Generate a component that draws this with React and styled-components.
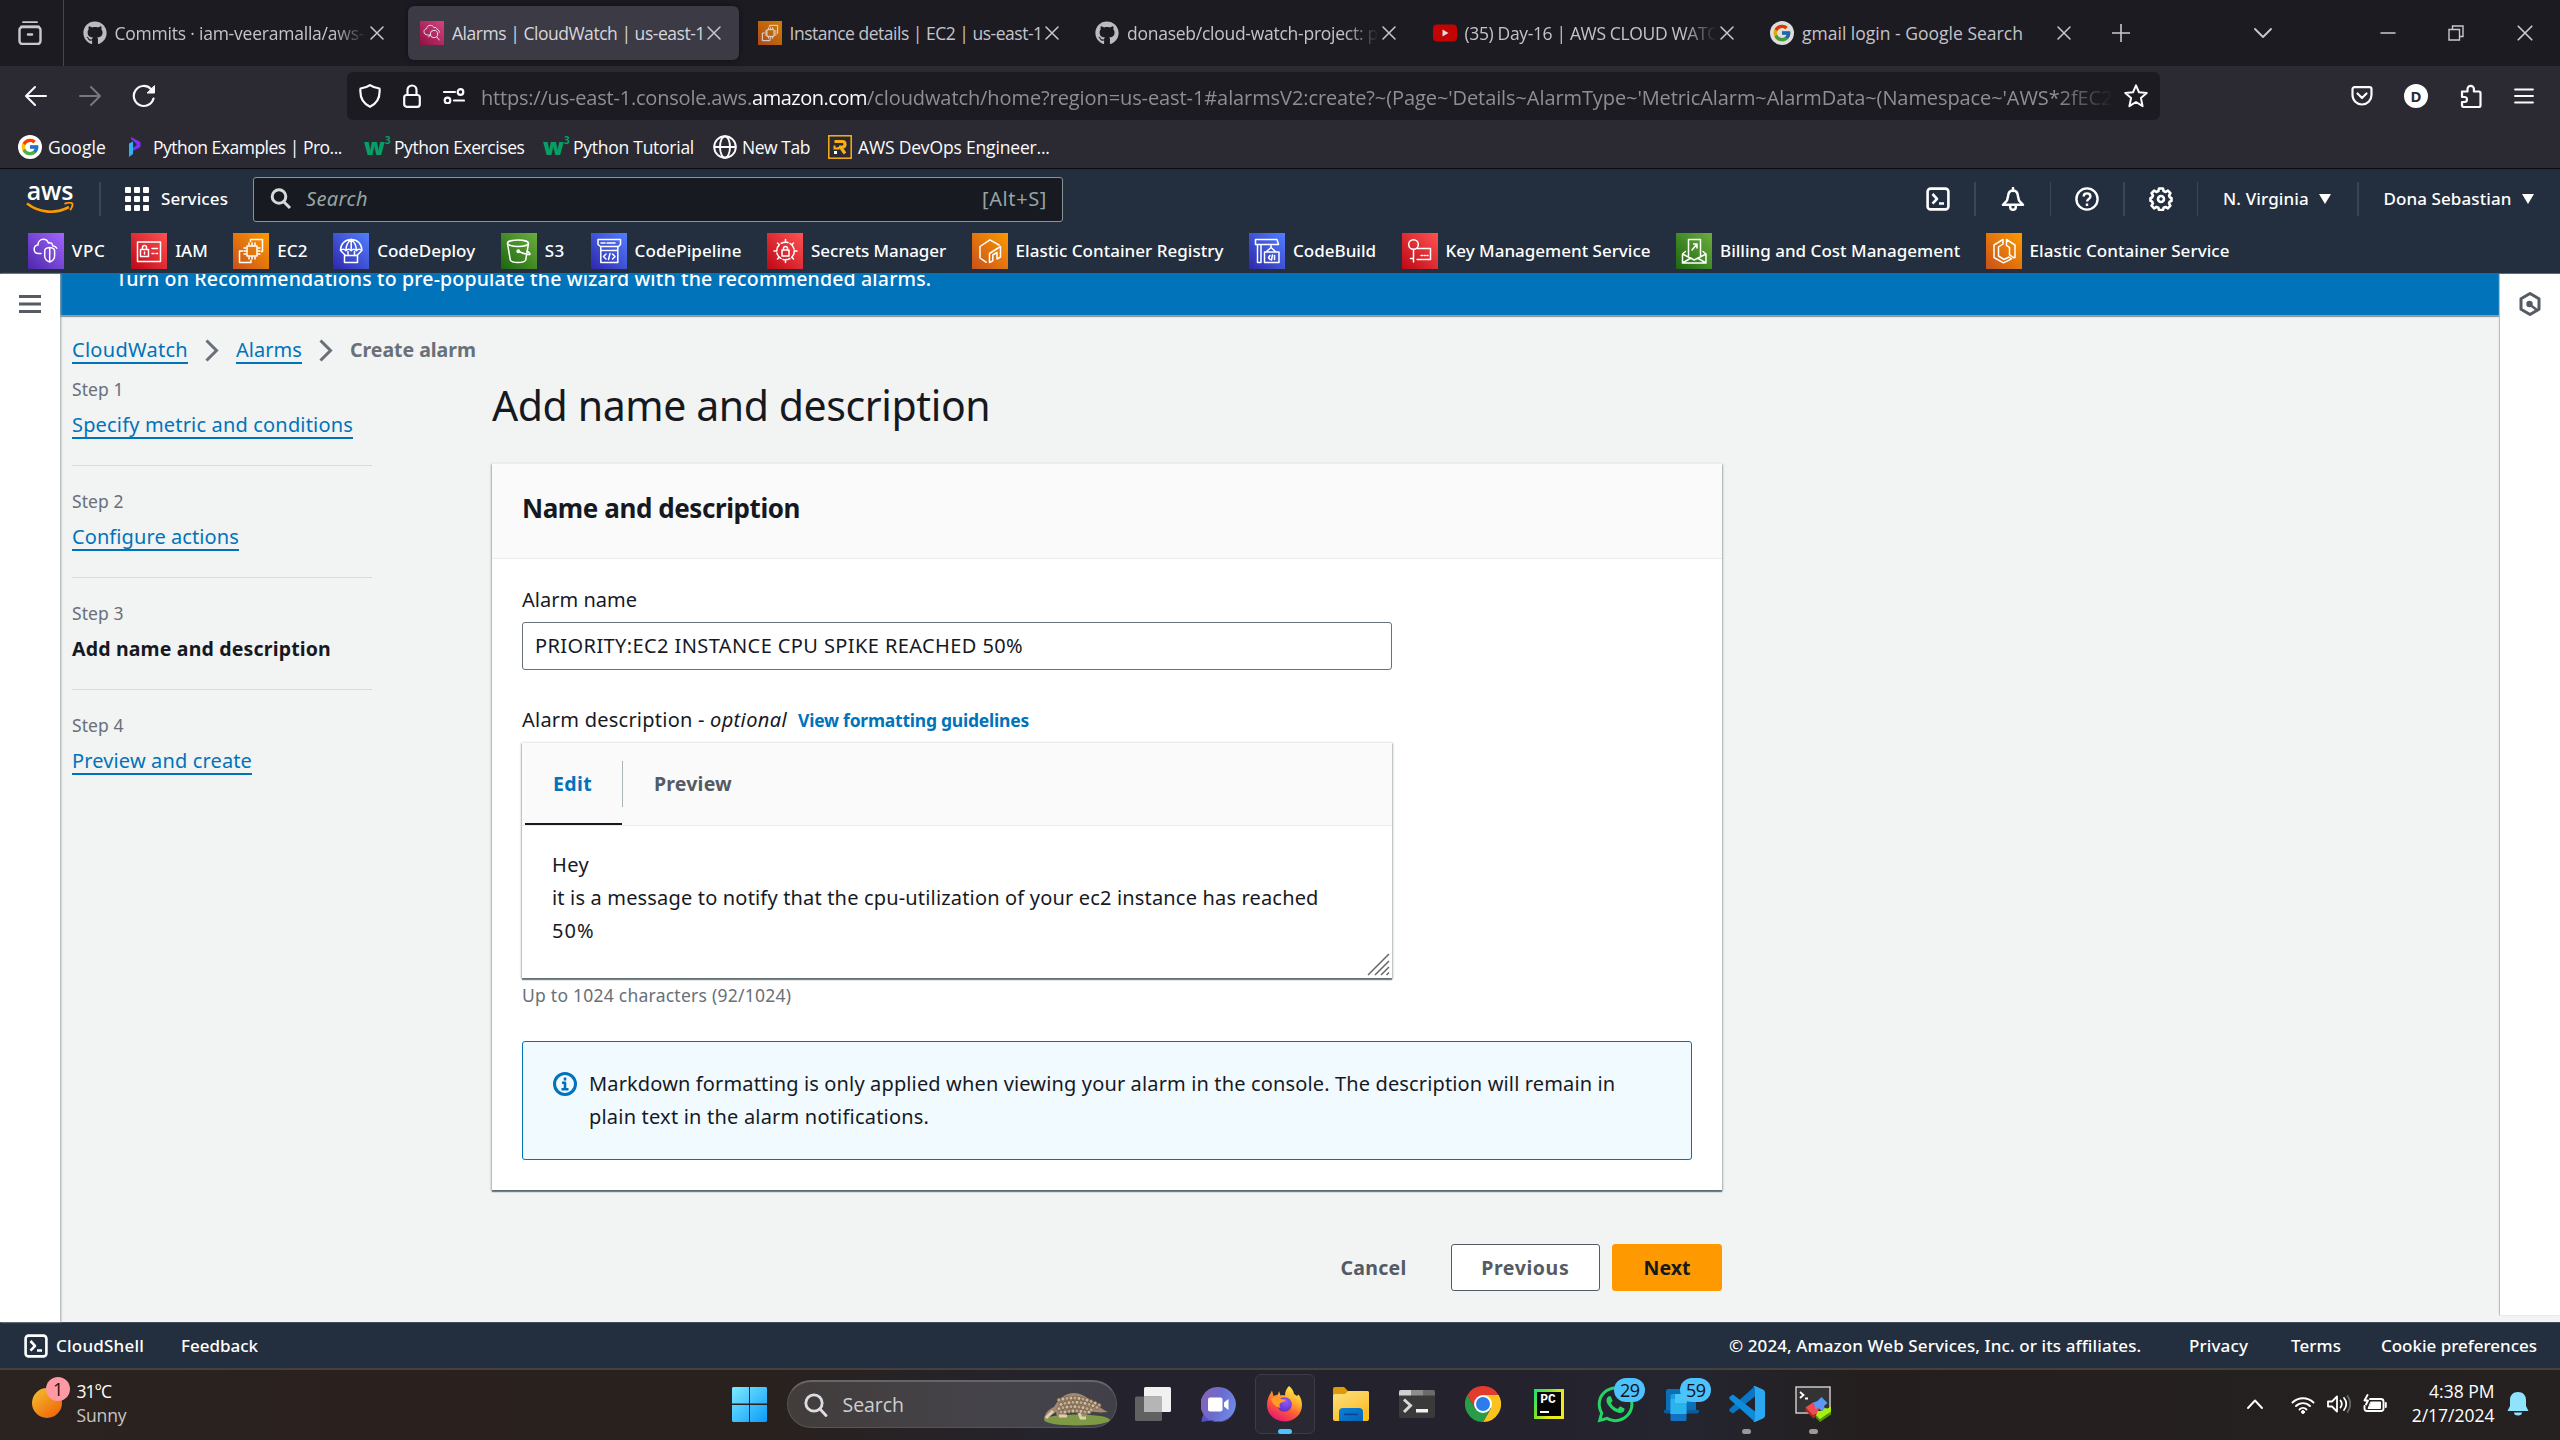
import React from 'react';
import styled, { createGlobalStyle, css } from 'styled-components';
import { FaGithub, FaWhatsapp } from 'react-icons/fa';
import { FcGoogle } from 'react-icons/fc';

const ember = '"Noto Sans", "Open Sans", sans-serif';
const segoe = '"Open Sans", "Noto Sans", sans-serif';

const Global = createGlobalStyle`
  * { box-sizing: border-box; }
  html, body { margin: 0; padding: 0; }
  body { width: 2560px; height: 1440px; overflow: hidden; background: #f2f3f3; font-family: ${ember}; }
  svg { display: block; flex: none; }
`;

const T = styled.span`
  display: block;
  flex: none;
  white-space: pre;
  font-family: ${(p) => (p.$ui ? segoe : ember)};
  font-size: ${(p) => p.$s || 20}px;
  font-weight: ${(p) => p.$b || 400};
  font-style: ${(p) => (p.$i ? 'italic' : 'normal')};
  line-height: ${(p) => p.$lh || 26}px;
  letter-spacing: ${(p) => p.$ls || 0}px;
  color: ${(p) => p.$c || '#16191f'};
  margin-left: ${(p) => p.$ml || 0}px;
  width: ${(p) => (p.$w ? p.$w + 'px' : 'auto')};
`;

const Page = styled.div`
  width: 2560px;
  height: 1440px;
  display: flex;
  flex-direction: column;
  overflow: hidden;
`;

/* ---------- browser chrome ---------- */
const TabStrip = styled.div`
  height: 66px;
  flex: none;
  background: #1c1b22;
  display: flex;
  align-items: center;
`;
const TabLead = styled.div`
  width: 64px;
  height: 66px;
  border-right: 1px solid #46454c;
  display: flex;
  align-items: center;
  padding-left: 18px;
  margin-right: 6.5px;
`;
const Tab = styled.div`
  width: 331px;
  height: 54px;
  margin-right: 6.5px;
  border-radius: 6px;
  padding-left: 12px;
  display: flex;
  align-items: center;
  background: ${(p) => (p.$active ? '#3b3a45' : 'transparent')};
  box-shadow: ${(p) => (p.$active ? '0 0 5px rgba(0,0,0,.5)' : 'none')};
`;
const TabTitle = styled.div`
  width: 254px;
  margin: 0 0 0 8px;
  ${(p) =>
    p.$fade &&
    css`
      mask-image: linear-gradient(to right, #000 86%, transparent 99%);
    `}
`;
const TabIcon = styled.div`
  width: 24px;
  height: 24px;
  opacity: 0.85;
  display: flex;
  align-items: center;
`;
const Gap = styled.div`
  flex: none;
  width: ${(p) => p.$w}px;
`;
const NavBar = styled.div`
  height: 60px;
  flex: none;
  background: #2b2a33;
  display: flex;
  align-items: center;
  padding-left: 24px;
`;
const UrlBar = styled.div`
  width: 1813px;
  height: 48px;
  border-radius: 6px;
  background: #1c1b22;
  display: flex;
  align-items: center;
  padding-left: 12px;
`;
const UrlText = styled.div`
  width: 1633px;
  margin-left: 16px;
  padding-top: 3px;
  display: flex;
  mask-image: linear-gradient(to right, #000 96.5%, transparent 100%);
`;
const Bookmarks = styled.div`
  height: 43px;
  flex: none;
  background: #2b2a33;
  border-bottom: 1px solid #0c0c0d;
  display: flex;
  align-items: center;
  padding-left: 18px;
`;
const RoundIcon = styled.div`
  width: 24px;
  height: 24px;
  border-radius: 50%;
  background: #fff;
  display: flex;
  align-items: center;
  justify-content: center;
`;
const W3Mark = styled.div`
  width: 24px;
  height: 24px;
  display: flex;
`;
const Letter = styled.span`
  font: ${(p) => p.$font};
  color: ${(p) => p.$c};
  letter-spacing: ${(p) => p.$ls || 0}px;
`;

/* ---------- AWS header ---------- */
const AwsBar = styled.div`
  height: 60px;
  flex: none;
  background: #232f3e;
  display: flex;
  align-items: center;
`;
const Logo = styled.div`
  width: 48px;
  height: 36px;
  margin-left: 26px;
  display: flex;
  flex-direction: column;
  align-items: center;
`;
const LogoWord = styled.span`
  font: 600 25px/18px ${segoe};
  height: 21px;
  letter-spacing: -0.2px;
  color: #fff;
`;
const Rule = styled.div`
  flex: none;
  width: 1.5px;
  height: 34px;
  background: #3c4653;
  margin-left: ${(p) => p.$ml || 0}px;
`;
const SearchBox = styled.div`
  width: 810px;
  height: 45px;
  margin-left: 25px;
  border: 1.5px solid #879596;
  border-radius: 3px;
  background: #171a21;
  display: flex;
  align-items: center;
  padding-left: 16px;
`;
const FavBar = styled.div`
  height: 45px;
  flex: none;
  background: #232f3e;
  border-bottom: 1px solid #545b64;
  display: flex;
  align-items: center;
  padding-left: 28px;
  gap: 25.8px;
`;
const Fav = styled.div`
  display: flex;
  align-items: center;
  gap: 7.7px;
`;
const Tile = styled.div`
  width: 36px;
  height: 36px;
  background: linear-gradient(45deg, ${(p) => p.$from}, ${(p) => p.$to});
`;
const SmallTile = styled(Tile)`
  width: 24px;
  height: 24px;
  & > svg {
    width: 24px;
    height: 24px;
  }
`;

/* ---------- console body ---------- */
const Body = styled.div`
  height: 1048px;
  flex: none;
  display: flex;
  background: #f2f3f3;
`;
const Rail = styled.div`
  width: 60px;
  height: ${(p) => p.$h}px;
  background: #fff;
  z-index: 1;
  box-shadow: ${(p) => (p.$right ? '-1px 0 1px #b9c0c4' : '1px 0 2px #9fa8ac')};
  padding: 18px 0 0 ${(p) => (p.$right ? 18 : 19)}px;
`;
const Content = styled.div`
  width: 2440px;
`;
const BlueBar = styled.div`
  height: 41px;
  background: #0073bb;
  overflow: hidden;
  box-shadow: 0 2px 1px #8d9aa0;
`;
const BlueText = styled.div`
  margin-top: -10px;
  padding-left: 56px;
`;
const Crumbs = styled.div`
  height: 49px;
  padding: 21px 0 0 12px;
  display: flex;
  align-items: flex-start;
`;
const Link = styled.a`
  display: block;
  width: max-content;
  padding-top: 2px;
  border-bottom: 2px solid ${(p) => (p.$current ? 'transparent' : '#0073bb')};
`;
const CrumbArrow = styled.svg`
  margin: 0 17px;
`;
const Columns = styled.div`
  margin-top: 12px;
  padding-left: 12px;
  display: grid;
  grid-template-columns: 300px 1230px;
  column-gap: 120px;
  align-items: start;
`;
const Step = styled.div`
  height: 112px;
  & > a {
    margin-top: 8px;
  }
`;
const StepRule = styled.div`
  height: 1px;
  margin-top: 26px;
  background: #d5dbdb;
`;
const Heading = styled.div`
  padding-top: 2px;
`;
const Card = styled.section`
  margin-top: 30px;
  height: 727px;
  background: #fff;
  border-top: 1px solid #eaeded;
  box-shadow: 0 2px 1px 0 rgba(0, 28, 36, 0.45), 1px 1px 2px 0 rgba(0, 28, 36, 0.25), -1px 1px 2px 0 rgba(0, 28, 36, 0.25);
`;
const CardHead = styled.header`
  height: 95px;
  background: #fafafa;
  border-bottom: 1px solid #eaeded;
  padding: 26px 30px 0;
`;
const CardBody = styled.div`
  padding: 24px 30px 0;
`;
const Field = styled.div`
  width: 870px;
  height: 48px;
  margin-top: 6px;
  border: 1.5px solid #687078;
  border-radius: 3px;
  padding-left: 12px;
  display: flex;
  align-items: center;
`;
const LabelRow = styled.div`
  margin-top: 33px;
  display: flex;
  align-items: baseline;
`;
const Editor = styled.div`
  position: relative;
  width: 870px;
  height: 236px;
  margin-top: 5px;
  background: #fff;
  border-top: 1px solid #eaeded;
  box-shadow: 0 2px 1px 0 rgba(0, 28, 36, 0.45), 1px 1px 2px 0 rgba(0, 28, 36, 0.25), -1px 1px 2px 0 rgba(0, 28, 36, 0.25);
`;
const EditorTabs = styled.div`
  height: 83px;
  background: #fafafa;
  border-bottom: 1px solid #eaeded;
  display: flex;
`;
const EditorTab = styled.div`
  height: 82px;
  margin-left: 3px;
  width: 97px;
  border-bottom: 2px solid ${(p) => (p.$active ? '#16191f' : 'transparent')};
  padding: 28px 0 0 28px;
`;
const TabRule = styled.div`
  width: 1px;
  height: 46px;
  margin-top: 18px;
  background: #aab7b8;
`;
const EditorText = styled.div`
  padding: 22px 0 0 30px;
`;
const Handle = styled.svg`
  position: absolute;
  right: 1px;
  bottom: 1px;
`;
const Hint = styled.div`
  padding-top: 2px;
`;
const Info = styled.div`
  height: 119px;
  width: 1170px;
  margin-top: 31px;
  border: 1.5px solid #0073bb;
  border-radius: 3px;
  background: #f1faff;
  padding: 25px 0 0 30px;
  display: flex;
  gap: 12px;
  & > svg {
    margin-top: 5px;
  }
`;
const Actions = styled.div`
  margin-top: 54px;
  display: flex;
  justify-content: flex-end;
  align-items: center;
`;
const Button = styled.button`
  width: ${(p) => p.$w}px;
  height: 47px;
  margin-left: ${(p) => p.$ml}px;
  padding: 0;
  border-radius: 3px;
  border: 1.5px solid ${(p) => (p.$primary ? '#ff9900' : '#545b64')};
  background: ${(p) => (p.$primary ? '#ff9900' : '#fff')};
  display: flex;
  align-items: center;
  justify-content: center;
`;
const Footer = styled.footer`
  height: 46px;
  flex: none;
  background: #232f3e;
  border-top: 1px solid #414d5c;
  display: flex;
  align-items: center;
  padding: 0 0 0 24px;
`;

/* ---------- taskbar ---------- */
const Taskbar = styled.div`
  height: 72px;
  flex: none;
  border-top: 2px solid #45413f;
  padding-bottom: 2px;
  background: linear-gradient(to right, #2b231f 0, #2a211f 480px, #29211e 760px, #24232d 1080px, #24232d 1550px, #242530 1690px, #241f1e 1860px, #252120 100%);
  display: flex;
  align-items: center;
`;
const Weather = styled.div`
  position: relative;
  width: 44.5px;
  height: 48px;
  margin-left: 32px;
  padding-top: 8px;
`;
const WeatherText = styled.div`
  height: 48px;
  width: 655px;
  margin-top: -2px;
  display: flex;
  flex-direction: column;
`;
const Badge = styled.span`
  position: absolute;
  left: ${(p) => p.$x}px;
  top: ${(p) => p.$y}px;
  width: ${(p) => p.$w}px;
  height: 24px;
  border-radius: 12px;
  background: ${(p) => p.$bg};
  color: #111;
  font: 18px/24px ${segoe};
  letter-spacing: -0.5px;
  text-align: center;
`;
const SearchPill = styled.div`
  position: relative;
  width: 330px;
  height: 48px;
  margin-left: 20px;
  border-radius: 24px;
  border: 1.5px solid #56545a;
  border-top: 2px solid #67656a;
  background: linear-gradient(to right, #423d3b, #45434a 60%, #414049);
  display: flex;
  align-items: center;
  padding-left: 16px;
`;
const Pangolin = styled.svg`
  position: absolute;
  left: 254px;
  top: 10px;
`;
const AppTile = styled.div`
  position: relative;
  flex: none;
  width: 60px;
  height: 60px;
  margin-left: 6.1px;
  border-radius: 6px;
  border: 1.5px solid ${(p) => (p.$active ? '#3d3c46' : 'transparent')};
  background: ${(p) => (p.$active ? '#2a2933' : 'transparent')};
  display: flex;
  align-items: center;
  justify-content: center;
`;
const RunDot = styled.span`
  position: absolute;
  bottom: -0.5px;
  left: ${(p) => (p.$wide ? 22 : 24)}px;
  width: ${(p) => (p.$wide ? 14 : 9)}px;
  height: 5px;
  border-radius: 3px;
  background: ${(p) => (p.$wide ? '#4cc2ff' : '#9a9999')};
`;
const Clock = styled.div`
  width: 84px;
  height: 48px;
  margin: -2px 0 0 24px;
  display: flex;
  flex-direction: column;
  align-items: flex-end;
`;

/* ---------- icons ---------- */
const S = ({ w = 24, h, vb, c = '#fff', sw = 2, fill = 'none', children }) => (
  <svg width={w} height={h || w} viewBox={vb || `0 0 ${w} ${h || w}`} fill={fill} stroke={c} strokeWidth={sw} strokeLinecap="round" strokeLinejoin="round">
    {children}
  </svg>
);
const Close = ({ c = '#c9c9cc', w = 16 }) => (
  <S w={w} vb="0 0 16 16" c={c} sw={1.5}>
    <path d="M2 2l12 12M14 2L2 14" />
  </S>
);
const ShellIcon = () => (
  <S w={24} sw={2.6}>
    <rect x="1.6" y="1.6" width="20.8" height="20.8" rx="3" />
    <path d="M6.500 7l4.500 4.800-4.500 4.800M13 16.500h5" strokeLinecap="butt" />
  </S>
);
const Help = () => (
  <S w={24} sw={2.4}>
    <circle cx="12" cy="12" r="10.6" />
    <path d="M8.7 9.6c0-2 1.4-3.2 3.3-3.2s3.4 1.2 3.4 3c0 2.4-3.3 2.6-3.3 5.2M12 16.6v2.4" strokeLinecap="butt" />
  </S>
);
const BellIcon = () => (
  <S w={24} sw={2.5}>
    <path d="M12 1v3M12 3.5c-3.6 0-4.8 2.6-5 6L6 13.5 2 17.8h20L18 13.5l-1-4c-.2-3.400-1.400-6-5-6zM9.200 18.500v1.500a2.800 2.800 0 0 0 5.600 0v-1.500" />
  </S>
);
const GearIcon = () => (
  <S w={24} sw={2.6}>
    <path d="M10 1.500h4l.6 2.600 2 .9 2.300-1.400 2.500 2.600-1.300 2.300.8 2 1.600.4v3l-1.700.6-.8 1.900 1.300 2.300-2.400 2.600-2.300-1.300-2 .8-.6 2.200h-4l-.6-2.200-2-.8-2.300 1.300-2.500-2.600 1.300-2.300-.8-1.900-1.600-.6v-3l1.600-.4.8-2-1.300-2.300 2.500-2.600 2.300 1.400 2-.9z" />
    <circle cx="12" cy="12" r="3" />
  </S>
);
const Tri = () => (
  <svg width="12" height="10" viewBox="0 0 12 10" fill="#fff">
    <path d="M0 0h12L6 10z" />
  </svg>
);
const Chevron = () => (
  <CrumbArrow width="14" height="28" viewBox="0 0 14 28" fill="none" stroke="#687078" strokeWidth="3">
    <path d="M1.500 4.500l10 10-10 10" />
  </CrumbArrow>
);
const Ec2Art = () => (
  <S w={36} sw={1.5}>
    <rect x="14" y="13" width="10" height="10" />
    <path d="M16 12v-2M19 12v-2M22 12v-2M16 26v-2M19 26v-2M22 26v-2M13 15h-2M13 18h-2M13 21h-2M27 15h-2M27 18h-2M27 21h-2" />
    <path d="M17.500 9V6.500h12v12H28M10 18H6.500v11.500H18V27" strokeLinecap="butt" />
  </S>
);
const ART = {
  VPC: (
    <S w={36} sw={1.5}>
      <path d="M13 20.500h-2.500c-2.700 0-4.300-2-4.300-4.300s1.600-4 3.800-4.200c0-3.300 2.300-5.700 5.400-5.700 2.500 0 4.300 1.400 5 3.700 2.500-.8 4 .5 4.200 2.700 2 .2 3.500 1 4.200 2.500" />
      <path d="M21.700 14.600c3 .2 4.900 1.600 4.900 3.400v5c0 3-2 5-4.900 6-3-1-5-3-5-6v-5c0-1.800 2-3.200 5-3.400zM21.700 14.600V29" />
    </S>
  ),
  IAM: (
    <S w={36} sw={1.5}>
      <rect x="6.500" y="9" width="23" height="19.500" />
      <rect x="9.500" y="16.500" width="8" height="7" />
      <path d="M11.500 16v-1.500a2 2 0 0 1 4 0V16M13.500 19v2M21 15.500h5.500M21 20.500h2M25 20.500h1.500" />
    </S>
  ),
  EC2: <Ec2Art />,
  CodeDeploy: (
    <S w={36} sw={1.5}>
      <path d="M7.500 17.500c0-6.500 4.500-11 10.700-11s10.700 4.500 10.700 11c-2-1.800-3.800-1.800-5.500.2-1.800-2-3.500-2-5.200 0-1.800-2-3.500-2-5.300 0-1.700-2-3.400-2-5.400-.2zM18.200 6.500v11M18.200 6.500c-3.500 2.500-5.300 6-5.300 11M18.200 6.500c3.500 2.500 5.200 6 5.200 11M7.500 17.500l5 5M28.900 17.500l-5 5M15 18.500v4M21.500 18.500v4" />
      <rect x="11.500" y="22.500" width="13" height="7" />
    </S>
  ),
  S3: (
    <S w={36} sw={1.5}>
      <ellipse cx="17" cy="10.200" rx="10.500" ry="3.200" />
      <path d="M6.500 10.500L9.300 27c.7 1.500 4 2.500 7.700 2.500s7-1 7.700-2.500l2.800-16.500M16.500 18c4 1.800 9 3.800 12.300 3.500.8-.4-.8-2.200-3-3.500" />
      <circle cx="17.300" cy="18.200" r="1.200" />
    </S>
  ),
  CodePipeline: (
    <S w={36} sw={1.5}>
      <path d="M7 6.500h22.500v5l-2 2h-18l-2.500-2zM9.800 14v15.500h17V14M9.800 17.500h17M10 10h4M16 10h8" />
      <path d="M15 21l-2.500 2.500L15 26M21.500 21l2.500 2.500-2.500 2.500M19 20.500l-1.500 6" />
    </S>
  ),
  'Secrets Manager': (
    <S w={36} sw={1.5}>
      <circle cx="18.500" cy="18" r="8.800" strokeDasharray="7 2.200" />
      <rect x="15" y="17" width="7" height="6" />
      <path d="M16.500 17v-1.500a2 2 0 0 1 4 0V17M18.500 9V6.500M18.500 29.500V27M7 18h2.500M27.500 18H30M10.500 10L12 11.500M26.500 10L25 11.500M10.500 26l1.500-1.500M26.500 26L25 24.500" />
    </S>
  ),
  'Elastic Container Registry': (
    <S w={36} sw={1.5}>
      <path d="M27 12L18 6.800 8 13.500V25l6 4.200M17.500 29.500V20.500l11-7v10.500l-3.500 2V19.500l-4.200 2.500v5.800z" />
    </S>
  ),
  CodeBuild: (
    <S w={36} sw={1.5}>
      <path d="M6.500 6.500H28l1.500 5H6.500zM8.500 11.500V29.500h3.500V11.500M22 11.500V14M15.500 19v10.500H30V19zM17 19l5-4.500 5 4.500M21 22.500l-1.500 2 1.500 2M25.500 22.500v4M23.500 22l-1 5" />
    </S>
  ),
  'Key Management Service': (
    <S w={36} sw={1.5}>
      <circle cx="11.500" cy="11.500" r="4.800" />
      <path d="M11.500 16.500v12.500M8.500 25.500h3M15 15.500h4M18 15.500h10.500v11H15M19 22.500h1.500M22 22.500h1.500M25 22.500h1" />
    </S>
  ),
  'Billing and Cost Management': (
    <S w={36} sw={1.5}>
      <path d="M9.500 18.500L6.500 21v9h23.500v-9l-3-2.500M6.500 21l11.700 6L30 21M6.500 30l8.500-5M30 30l-8.500-5M12.500 22.500V6.500h12v16M16 17l5-6M17.500 11H21v4" />
    </S>
  ),
  'Elastic Container Service': (
    <S w={36} sw={1.5}>
      <path d="M17 6.500L8 12v12.500l9.500 5.300 8-4-2.500-1.800-5 2.500-5.500-3.500V14l4.500-3z" />
      <path d="M20.500 6.500L29 12v12.500l-1 .3-4.500-3V14.500l-3-2.200z" />
    </S>
  ),
};
const FAVS = [
  ['VPC', 34, 0.79, '#4d27aa', '#a166ff'],
  ['IAM', 32.5, -0.09, '#bd0816', '#ff5252'],
  ['EC2', 30.5, 0.17, '#c8511b', '#ff9900'],
  ['CodeDeploy', 98, 0.02, '#2e27ad', '#527fff'],
  ['S3', 20.5, 0.6, '#1b660f', '#6cae3e'],
  ['CodePipeline', 107, 0.05, '#2e27ad', '#527fff'],
  ['Secrets Manager', 135, -0.1, '#bd0816', '#ff5252'],
  ['Elastic Container Registry', 208, 0.03, '#c8511b', '#ff9900'],
  ['CodeBuild', 83, 0, '#2e27ad', '#527fff'],
  ['Key Management Service', 205, 0, '#bd0816', '#ff5252'],
  ['Billing and Cost Management', 240, 0.01, '#1b660f', '#6cae3e'],
  ['Elastic Container Service', 200, 0.06, '#c8511b', '#ff9900'],
];

/* ---------- taskbar drawings ---------- */
const WinLogo = () => (
  <svg width="35" height="35" viewBox="0 0 35 35">
    <defs>
      <linearGradient id="win" x1="0" y1="0" x2="1" y2="1" gradientUnits="objectBoundingBox">
        <stop offset="0" stopColor="#7eeaff" />
        <stop offset="1" stopColor="#0a9bfa" />
      </linearGradient>
      <mask id="winm">
        <path fill="#fff" d="M1 0h16v16.500H0V1zM18 0h16l1 1v15.500H18zM0 18h17v17H1l-1-1zM18 18h17v16l-1 1H18z" />
      </mask>
    </defs>
    <rect width="35" height="35" fill="url(#win)" mask="url(#winm)" />
  </svg>
);
const scales = [];
for (let r = 0; r < 4; r++) for (let k = 0; k < 11 - r; k++) scales.push([17 + k * 4 + (r % 2) * 2, 6 + r * 4.3 + Math.pow((k - 3.5) / 2.3, 2) * 0.9]);
const Taskview = () => (
  <svg width="36" height="34" viewBox="0 0 36 34">
    <rect x="9" y="0" width="27" height="25" rx="1.500" fill="#f1f1f1" />
    <rect x="0" y="9.500" width="27" height="24.500" rx="1.500" fill="#616161" />
    <rect x="9" y="9.500" width="18" height="15.500" fill="#b5b5b6" />
  </svg>
);
const Chat = () => (
  <svg width="35" height="35" viewBox="0 0 35 35">
    <defs>
      <linearGradient id="chat" x1="0" y1="0.200" x2="1" y2="0.600">
        <stop offset="0" stopColor="#8b62b8" />
        <stop offset=".5" stopColor="#6a6ccd" />
        <stop offset="1" stopColor="#6f8ae6" />
      </linearGradient>
    </defs>
    <path d="M17.500 0a17.300 17.300 0 1 1-6 33.500L.5 34.500l2-7.500A17.300 17.300 0 0 1 17.500 0z" fill="url(#chat)" />
    <path d="M2.500 27A17.300 17.300 0 0 0 33 25a17.500 17.500 0 0 1-21.500 8.500L.5 34.500z" fill="#5252c4" />
    <rect x="7" y="10.500" width="14.500" height="14" rx="2" fill="#fff" />
    <path d="M23 15.500l4.500-3.500v11L23 19.500z" fill="#fff" />
  </svg>
);
const Firefox = () => (
  <svg width="35" height="36" viewBox="0 0 35 36">
    <defs>
      <linearGradient id="ff" x1=".8" y1="0" x2=".25" y2="1">
        <stop offset="0" stopColor="#fff44f" />
        <stop offset=".35" stopColor="#ffb02e" />
        <stop offset=".62" stopColor="#ff5a36" />
        <stop offset="1" stopColor="#e3117c" />
      </linearGradient>
      <radialGradient id="ffp" cx=".6" cy=".3" r=".8">
        <stop offset="0" stopColor="#9059ff" />
        <stop offset="1" stopColor="#5a2bc0" />
      </radialGradient>
    </defs>
    <path d="M22 0c3 2 4.500 5 5 8l3 2 1.500-1.500C34 12 35 15 35 19c0 9.500-7.800 16.500-17.300 16.500S0 28.500 0 19c0-5 1.500-8.500 3.500-11.500L5 4.500l1.500 5.500L11 8.500 12 5l1.500 4.500C15 9 16 9 18 9.500c0-4 1.500-7 4-9.500z" fill="url(#ff)" />
    <circle cx="17.500" cy="18.500" r="7.300" fill="url(#ffp)" />
    <path d="M4 13c4-3 8-2 10 0l5 .8c-1 2-3 2.500-5 3-2 1-2 3-.5 5-4-.3-8-3.800-9.500-8.800z" fill="#ff9a2b" />
  </svg>
);
const Explorer = () => (
  <svg width="36" height="34" viewBox="0 0 36 34">
    <defs>
      <linearGradient id="fold" x1="0" y1="0" x2=".6" y2="1">
        <stop offset="0" stopColor="#ffe084" />
        <stop offset="1" stopColor="#fbbd20" />
      </linearGradient>
      <linearGradient id="foldb" x1="0" y1="0" x2="1" y2="1">
        <stop offset="0" stopColor="#0d7fd8" />
        <stop offset="1" stopColor="#0565b8" />
      </linearGradient>
    </defs>
    <path d="M0 2q0-2 2-2h9l4 4h19q2 0 2 2v5H0z" fill="#dd9b07" />
    <path d="M0 9q0-2 2-2h10l3-3h19q2 0 2 2v26q0 2-2 2H2q-2 0-2-2z" fill="url(#fold)" />
    <path d="M6 34V25q0-4 4-4h16q4 0 4 4v9z" fill="url(#foldb)" />
    <rect x="11" y="26.500" width="14" height="1.800" rx=".9" fill="#0a4a8c" />
  </svg>
);
const Terminal = () => (
  <svg width="36" height="28" viewBox="0 0 36 28">
    <rect width="36" height="28" rx="2" fill="#3a3a3b" />
    <path d="M0 2q0-2 2-2h10v5.500H0z" fill="#cfcfcf" />
    <path d="M12 0h12v5.500H12z" fill="#8d8d8d" />
    <path d="M24 0h10q2 0 2 2v3.500H24z" fill="#6b6b6b" />
    <path d="M5 9.500l6.500 6L5 22" stroke="#d9d9d9" strokeWidth="3" fill="none" />
    <rect x="17" y="19" width="12" height="3.500" fill="#f2f2f2" />
  </svg>
);
const Chrome = () => (
  <svg width="36" height="36" viewBox="0 0 36 36">
    <path d="M18 9H33.600A18 18 0 0 1 18 36l7.800-13.500z" fill="#fcc31e" />
    <path d="M2.400 9A18 18 0 0 0 18 36l7.800-13.500L18 26 10.200 22.500z" fill="#2a9b47" />
    <path d="M18 9h15.600A18 18 0 0 0 2.400 9l7.800 13.500z" fill="#e33b2e" />
    <circle cx="18" cy="18" r="9" fill="#fff" />
    <circle cx="18" cy="18" r="7" fill="#2b7de9" />
  </svg>
);
const PyBox = styled.div`
  width: 30px;
  height: 30px;
  padding: 3px;
  background: linear-gradient(120deg, #14e27a 0, #7be02f 35%, #e8e91d 65%, #f3ec1f);
`;
const PyInner = styled.div`
  width: 24px;
  height: 24px;
  background: #050505;
  padding: 1px 0 0 3px;
  color: #fff;
  font: 700 13px/13px "Liberation Mono", monospace;
`;
const PyDash = styled.div`
  width: 9px;
  height: 2px;
  margin-top: 5px;
  background: #fff;
`;
const Phone = () => (
  <svg width="35" height="33" viewBox="0 0 35 33">
    <path d="M2 3q0-2 2-2h25q3 0 3 3v18H2z" fill="#0b6fb8" />
    <path d="M0 22h35v1.500q0 2-2 2H2q-2 0-2-2z" fill="#0a5c9c" />
    <path d="M6.500 8q0-2 2-2H15v20H6.500z" fill="#1a9be4" />
    <rect x="6.500" y="11" width="16" height="22" rx="1" fill="#1172c4" />
    <path d="M6.500 11h16v15h-16z" fill="#2bb3ee" />
    <path d="M11 6h12v9H11z" fill="#47c5f6" />
  </svg>
);
const Code = () => (
  <svg width="36" height="36" viewBox="0 0 36 36">
    <path d="M26 0v10.500L4 27.500 1 25.500q-1.500-1.500 0-3z" fill="#0a76c4" />
    <path d="M1 10.500L4 8.500 26 25.500V36L1 13.500q-1.500-1.500 0-3z" fill="#0d8bdc" />
    <path d="M26 0l8 3.500q2 1 2 3v23q0 2-2 3L26 36q-1 0-2-1 2 .5 2-2V3q0-2.500-2-2 1-1 2-1z" fill="#2aa8f2" />
  </svg>
);
const Moba = () => (
  <svg width="37" height="36" viewBox="0 0 37 36">
    <rect x="1" y="1" width="34" height="26" fill="#333" stroke="#c9c9c9" strokeWidth="1.500" />
    <path d="M5 6l3.500 3L5 12M10 12.500h3" stroke="#fff" strokeWidth="1.800" fill="none" />
    <path d="M10.500 21.500l8-5.500 2 5 3.500 1-1 4-5 4z" fill="#f2494c" />
    <path d="M10.500 21.500l8 8 4.500-3v3l-4.500 3-8-8z" fill="#b3262b" />
    <path d="M18.500 16.500l4-1.500 4-4 6 6-3.500 3 1 3-3.500 2-3-3-3 1z" fill="#5b97f5" />
    <path d="M23 25l4 0 3-3 2.500.5 3.500-2 0 5-11 8-4-4z" fill="#a6ef0e" />
    <path d="M21 29.500l4 4 11-8v3L25 36l-4-4z" fill="#4d9a06" />
  </svg>
);

function TabItem({ icon, title, active, fade, ls }) {
  return (
    <Tab $active={active}>
      <TabIcon>{icon}</TabIcon>
      <TabTitle $fade={fade}>
        <T $ui $s={17.5} $c={active ? '#d6d6da' : '#c4c4c8'} $ls={ls}>
          {title}
        </T>
      </TabTitle>
      <Close />
    </Tab>
  );
}

function StepItem({ n, title, ls, current, last }) {
  return (
    <Step>
      <T $s={17.5} $lh={27} $c="#687078" $ls={0.06}>{`Step ${n}`}</T>
      <Link $current={current}>
        <T $s={current ? 19.5 : 20} $lh={24} $b={current ? 700 : 400} $c={current ? '#16191f' : '#0073bb'} $ls={ls}>
          {title}
        </T>
      </Link>
      {!last && <StepRule />}
    </Step>
  );
}

const Mark = ({ children, w, ls, ml = 6 }) => (
  <T $ui $s={17.5} $c="#fbfbfe" $ml={ml} $w={w} $ls={ls}>
    {children}
  </T>
);
const W3 = () => (
  <W3Mark>
    <Letter $font='800 23px/22px "Open Sans", sans-serif' $c="#04a066">w</Letter>
    <Letter $font='700 10px/10px "Open Sans", sans-serif' $c="#04a066" $ls={-1}>3</Letter>
  </W3Mark>
);
const Light = ({ children, w, ls, ml }) => (
  <T $s={17} $b={500} $c="#fff" $ml={ml} $w={w} $ls={ls}>
    {children}
  </T>
);

export default function App() {
  return (
    <Page>
      <Global />
      <TabStrip>
        <TabLead>
          <S w={24} c="#c9c9cc" sw={2.4}>
            <path d="M5 1.200h14M3 5.500h18" strokeWidth="1.800" />
            <rect x="1.500" y="6" width="21" height="17" rx="3" />
            <path d="M10 13.500h4" />
          </S>
        </TabLead>
        <TabItem fade icon={<FaGithub size={24} color="#d8d8da" />} title="Commits · iam-veeramalla/aws-" ls={-0.22} />
        <TabItem
          active
          ls={-0.47}
          title="Alarms | CloudWatch | us-east-1"
          icon={
            <SmallTile $from="#a00a42" $to="#f0458c">
              <S w={36} sw={1.5}>
                <path d="M15 21h-4c-3-.5-5-2-5-5s2-4 4-4.500c0-3 2.500-5 5.500-5s4.500 1.500 5.500 3.500c2-1 4 0 4.500 2.500 2 .5 3.500 1.500 3.500 4.500M15 21l-2 3" />
                <circle cx="21" cy="19.500" r="5.500" />
                <path d="M25 23.500l4 5" />
              </S>
            </SmallTile>
          }
        />
        <TabItem
          ls={-0.49}
          title="Instance details | EC2 | us-east-1"
          icon={
            <SmallTile $from="#c8511b" $to="#ee9000">
              <Ec2Art />
            </SmallTile>
          }
        />
        <TabItem fade icon={<FaGithub size={24} color="#d8d8da" />} title="donaseb/cloud-watch-project: p" ls={-0.26} />
        <TabItem
          fade
          ls={-0.36}
          title="(35) Day-16 | AWS CLOUD WATC"
          icon={
            <svg width="24" height="24" viewBox="0 0 24 24">
              <rect y="3.500" width="24" height="17" rx="4" fill="#e00000" />
              <path d="M9.500 8.500v7l6-3.500z" fill="#fff" />
            </svg>
          }
        />
        <TabItem
          ls={0.01}
          title="gmail login - Google Search"
          icon={
            <RoundIcon>
              <FcGoogle size={20} />
            </RoundIcon>
          }
        />
        <Gap $w={16} />
        <S w={18} c="#c9c9cc" sw={1.6}>
          <path d="M9 0.500v17M0.500 9h17" />
        </S>
        <Gap $w={124} />
        <S w={18} h={10} c="#c9c9cc" sw={1.8}>
          <path d="M1 1l8 8 8-8" />
        </S>
        <Gap $w={108} />
        <S w={16} h={2} c="#c9c9cc" sw={1.5}>
          <path d="M1 1h14" />
        </S>
        <Gap $w={52} />
        <S w={16} c="#c9c9cc" sw={1.4}>
          <path d="M1 4.500h10.500V15H1zM4.500 4V1H15v10.500h-3" strokeLinejoin="miter" />
        </S>
        <Gap $w={52} />
        <Close w={18} />
      </TabStrip>

      <NavBar>
        <S w={24} c="#fbfbfe" sw={2}>
          <path d="M22 12H2.500M11 3l-9 9 9 9" />
        </S>
        <Gap $w={30} />
        <S w={24} c="#77767d" sw={2}>
          <path d="M2 12h19.500M13 3l9 9-9 9" />
        </S>
        <Gap $w={30} />
        <S w={24} c="#fbfbfe" sw={2.2}>
          <path d="M21.500 14.500A10 10 0 1 1 19 5l2 2.500" />
          <path d="M22.500 2v7h-7z" fill="#fbfbfe" strokeWidth="1" />
        </S>
        <Gap $w={191} />
        <UrlBar>
          <S w={22} h={24} c="#fbfbfe" sw={2.2}>
            <path d="M11 1.200c2.800 2 6 3 9.500 3.300.8 8-2.500 15-9.500 18.300C4 19.500.7 12.500 1.500 4.500 5 4.200 8.200 3.200 11 1.200z" />
          </S>
          <Gap $w={22} />
          <S w={18} h={24} c="#fbfbfe" sw={2.2}>
            <rect x="1.200" y="11" width="15.600" height="11.800" rx="2.500" />
            <path d="M4.500 11V6a4.500 4.500 0 0 1 9 0v5" />
          </S>
          <Gap $w={22} />
          <S w={22} h={16} c="#fbfbfe" sw={2.2}>
            <path d="M1 4h11M11 12.500h10" />
            <circle cx="17.500" cy="4" r="2.800" />
            <circle cx="4.500" cy="12.500" r="2.800" />
          </S>
          <UrlText>
            <T $ui $lh={30} $c="#8f8e95" $w={271} $ls={-0.2}>https://us-east-1.console.aws.</T>
            <T $ui $lh={30} $c="#fbfbfe" $w={115} $ls={-0.48}>amazon.com</T>
            <T $ui $lh={30} $c="#8f8e95" $w={1246} $ls={-0.09}>{"/cloudwatch/home?region=us-east-1#alarmsV2:create?~(Page~'Details~AlarmType~'MetricAlarm~AlarmData~(Namespace~'AWS*2fEC2"}</T>
          </UrlText>
          <Gap $w={10} />
          <S w={24} c="#fbfbfe" sw={2}>
            <path d="M12 1.300l3 7 7.700.6-5.800 5 1.700 8.300L12 18l-6.600 4.200 1.700-8.300-5.800-5L9 8.300z" />
          </S>
        </UrlBar>
        <Gap $w={191} />
        <S w={22} h={20} c="#fbfbfe" sw={2.2}>
          <path d="M3.500 1.200h15a2 2 0 0 1 2 2V9a9.500 9.500 0 0 1-19 0V3.200a2 2 0 0 1 2-2zM6.500 7.500L11 12l4.500-4.500" />
        </S>
        <Gap $w={31} />
        <RoundIcon>
          <Letter $font='700 15px/24px "Noto Sans", sans-serif' $c="#2b2a33">D</Letter>
        </RoundIcon>
        <Gap $w={32} />
        <S w={22} h={24} c="#fbfbfe" sw={2.2}>
          <path d="M2 9V7.500h5.500V5a3.200 3.200 0 0 1 6.400 0v2.500h5.100q1.500 0 1.500 1.500v12.500q0 1.500-1.500 1.500H4q-2 0-2-1.500V18h2.500a2.500 2.500 0 0 0 0-5H2z" />
        </S>
        <Gap $w={32} />
        <S w={20} h={16} c="#fbfbfe" sw={1.8}>
          <path d="M1 1.500h18M1 8h18M1 14.500h18" />
        </S>
      </NavBar>

      <Bookmarks>
        <RoundIcon>
          <FcGoogle size={20} />
        </RoundIcon>
        <Mark w={58} ls={0.05}>Google</Mark>
        <Gap $w={23} />
        <svg width="12" height="20" viewBox="0 0 12 20">
          <path d="M0 6.500l4-2V17L0 20z" fill="#2ab4f5" />
          <path d="M2 2V0l9.500 5v5L4 14V10.500L7.500 8.500V7z" fill="#7b2ff7" />
        </svg>
        <Mark ml={12} w={189} ls={-0.5}>Python Examples | Pro...</Mark>
        <Gap $w={22} />
        <W3 />
        <Mark w={130} ls={-0.42}>Python Exercises</Mark>
        <Gap $w={19} />
        <W3 />
        <Mark w={121} ls={-0.26}>Python Tutorial</Mark>
        <Gap $w={19} />
        <S w={24} c="#fbfbfe" sw={1.9}>
          <circle cx="12" cy="12" r="10.800" />
          <ellipse cx="12" cy="12" rx="5" ry="10.800" />
          <path d="M1.500 12h21" />
        </S>
        <Mark ml={5} w={68} ls={-0.46}>New Tab</Mark>
        <Gap $w={18} />
        <svg width="24" height="24" viewBox="0 0 24 24" fill="none">
          <rect x=".8" y=".8" width="22.400" height="22.400" stroke="#f9b016" strokeWidth="1.500" />
          <path d="M6.500 6.500h8q2.500 0 2.500 2.700T14.500 12H11M12.500 12l4.500 6.500" stroke="#f9b016" strokeWidth="3.200" />
          <path d="M6.500 10.500v3h4v-1.500" stroke="#f9b016" strokeWidth="2" />
          <rect x="6" y="16" width="3" height="3" fill="#fff" />
        </svg>
        <Mark w={192} ls={-0.17}>AWS DevOps Engineer...</Mark>
      </Bookmarks>

      <AwsBar>
        <Logo>
          <LogoWord>aws</LogoWord>
          <svg width="48" height="12" viewBox="0 0 48 12" fill="none" stroke="#ff9900">
            <path d="M1 1.500C14 11.500 30 12 43 5" strokeWidth="2.600" />
            <path d="M38.500 1.800c3-1 6.500-1.300 7.500-.5s.2 4-1.800 7" strokeWidth="1.800" />
          </svg>
        </Logo>
        <Rule $ml={25} />
        <Gap $w={24.5} />
        <svg width="24" height="24" fill="#fff">
          {[0, 9, 18].map((y) => [0, 9, 18].map((x) => <rect key={x + '-' + y} x={x} y={y} width="6" height="6" rx="1" />))}
        </svg>
        <Light ml={12} w={67} ls={0.1}>Services</Light>
        <SearchBox>
          <S w={22} c="#d5dbdb" sw={3}>
            <circle cx="9" cy="8.500" r="6.800" />
            <path d="M14 14l6 6" strokeLinecap="butt" />
          </S>
          <T $i $c="#95a5a6" $ml={14} $w={62} $ls={0.39}>Search</T>
          <Gap $w={614} />
          <T $c="#95a5a6" $w={65} $ls={0.61}>[Alt+S]</T>
        </SearchBox>
        <Gap $w={863} />
        <ShellIcon />
        <Rule $ml={24} />
        <Gap $w={25} />
        <BellIcon />
        <Rule $ml={25} />
        <Gap $w={24} />
        <Help />
        <Rule $ml={24} />
        <Gap $w={24} />
        <GearIcon />
        <Rule $ml={24} />
        <Light ml={25} w={86} ls={0.14}>N. Virginia</Light>
        <Gap $w={10} />
        <Tri />
        <Rule $ml={26} />
        <Light ml={25} w={128} ls={0.09}>Dona Sebastian</Light>
        <Gap $w={10} />
        <Tri />
      </AwsBar>

      <FavBar>
        {FAVS.map(([name, w, ls, from, to]) => (
          <Fav key={name}>
            <Tile $from={from} $to={to}>{ART[name]}</Tile>
            <Light w={w} ls={ls}>{name}</Light>
          </Fav>
        ))}
      </FavBar>

      <Body>
        <Rail $h={1048}>
          <svg width="22" height="24" viewBox="0 0 22 24" fill="#545b64">
            <rect y="3" width="22" height="3" />
            <rect y="10.500" width="22" height="3" />
            <rect y="18" width="22" height="3" />
          </svg>
        </Rail>
        <Content>
          <BlueBar>
            <BlueText>
              <T $s={19.5} $b={500} $lh={30} $c="#fff" $ls={0.17}>Turn on Recommendations to pre-populate the wizard with the recommended alarms.</T>
            </BlueText>
          </BlueBar>
          <Crumbs>
            <Link><T $lh={24} $c="#0073bb" $ls={0.28}>CloudWatch</T></Link>
            <Chevron />
            <Link><T $lh={24} $c="#0073bb" $ls={0.05}>Alarms</T></Link>
            <Chevron />
            <Link $current><T $s={19.5} $lh={24} $b={700} $c="#687078" $ls={-0.02}>Create alarm</T></Link>
          </Crumbs>
          <Columns>
            <div>
              <StepItem n={1} title="Specify metric and conditions" ls={0.17} />
              <StepItem n={2} title="Configure actions" ls={0.09} />
              <StepItem n={3} title="Add name and description" ls={0.17} current />
              <StepItem n={4} title="Preview and create" ls={0.14} last />
            </div>
            <div>
              <Heading>
                <T $s={41} $lh={55} $ls={-0.4}>Add name and description</T>
              </Heading>
              <Card>
                <CardHead>
                  <T $s={26} $b={700} $lh={36} $ls={-0.42}>Name and description</T>
                </CardHead>
                <CardBody>
                  <T $lh={33} $ls={0.01}>Alarm name</T>
                  <Field>
                    <T $ls={0.4}>PRIORITY:EC2 INSTANCE CPU SPIKE REACHED 50%</T>
                  </Field>
                  <LabelRow>
                    <T $lh={33} $w={188} $ls={0.23}>Alarm description - </T>
                    <T $lh={33} $i $w={77} $ls={0.38}>optional</T>
                    <T $lh={33} $s={17.5} $b={700} $c="#0073bb" $ml={11} $ls={-0.23}>View formatting guidelines</T>
                  </LabelRow>
                  <Editor>
                    <EditorTabs>
                      <EditorTab $active>
                        <T $s={19.5} $b={700} $c="#0073bb" $ls={0.36}>Edit</T>
                      </EditorTab>
                      <TabRule />
                      <EditorTab>
                        <T $s={19.5} $b={700} $c="#545b64" $ls={0.2}>Preview</T>
                      </EditorTab>
                    </EditorTabs>
                    <EditorText>
                      <T $lh={33} $ls={0.36}>Hey</T>
                      <T $lh={33} $ls={0.17}>it is a message to notify that the cpu-utilization of your ec2 instance has reached</T>
                      <T $lh={33} $ls={1}>50%</T>
                    </EditorText>
                    <Handle width="24" height="24" viewBox="0 0 24 24" stroke="#666" strokeWidth="1.500">
                      <path d="M1 22L22 1M8 22L22 8M14 22l8-8M19.500 22l2.500-2.500" />
                    </Handle>
                  </Editor>
                  <Hint>
                    <T $s={17.5} $lh={30} $c="#687078" $ls={0.24}>Up to 1024 characters (92/1024)</T>
                  </Hint>
                  <Info>
                    <S w={24} c="#0073bb" sw={3}>
                      <circle cx="12" cy="12" r="10.500" />
                      <path d="M12 5.500v3M9 10.800h3V17M8.500 17.200h7" strokeLinecap="butt" strokeWidth="2.600" />
                    </S>
                    <div>
                      <T $lh={33} $ls={0.14}>Markdown formatting is only applied when viewing your alarm in the console. The description will remain in</T>
                      <T $lh={33} $ls={0.2}>plain text in the alarm notifications.</T>
                    </div>
                  </Info>
                </CardBody>
              </Card>
              <Actions>
                <T $s={19.5} $b={700} $c="#545b64" $w={66} $ls={0.27}>Cancel</T>
                <Button $w={149.5} $ml={44}><T $s={19.5} $b={700} $c="#545b64" $ls={0.59}>Previous</T></Button>
                <Button $w={110} $ml={12} $primary><T $s={19.5} $b={700} $ls={0.04}>Next</T></Button>
              </Actions>
            </div>
          </Columns>
        </Content>
        <Rail $right $h={1041}>
          <S w={24} c="#545b64" sw={3}>
            <path d="M12 1.500l9 5.200v10.600l-9 5.200-9-5.200V6.700z" />
            <circle cx="11.500" cy="12" r="2.500" fill="#545b64" strokeWidth="1.500" />
            <path d="M13 13.500l6 4.500" strokeWidth="2.500" />
          </S>
        </Rail>
      </Body>

      <Footer>
        <ShellIcon />
        <Light ml={8} w={88} ls={0.21}>CloudShell</Light>
        <Light ml={37} w={77} ls={-0.02}>Feedback</Light>
        <Gap $w={1471} />
        <Light w={412} ls={0.1}>© 2024, Amazon Web Services, Inc. or its affiliates.</Light>
        <Light ml={48} w={59} ls={0.12}>Privacy</Light>
        <Light ml={43} w={50} ls={0.06}>Terms</Light>
        <Light ml={40} w={156} ls={-0.03}>Cookie preferences</Light>
      </Footer>

      <Taskbar>
        <Weather>
          <svg width="30" height="30" viewBox="0 0 30 30">
            <defs>
              <linearGradient id="sun" x1="0" y1="0" x2=".8" y2="1">
                <stop offset="0" stopColor="#f5c22e" />
                <stop offset="1" stopColor="#f0640a" />
              </linearGradient>
            </defs>
            <circle cx="15" cy="15" r="15" fill="url(#sun)" />
          </svg>
          <Badge $x={14} $y={-3} $w={24} $bg="#ff99a4">1</Badge>
        </Weather>
        <WeatherText>
          <T $ui $s={17.5} $lh={24} $c="#fff" $ls={-1}>31°C</T>
          <T $ui $s={17.5} $lh={24} $c="#c9c5c3" $ls={-0.11}>Sunny</T>
        </WeatherText>
        <WinLogo />
        <SearchPill>
          <S w={24} c="#dcdde2" sw={2.8}>
            <circle cx="10" cy="10" r="8.200" />
            <path d="M16 16l6 6.500" />
          </S>
          <T $ui $s={19.5} $c="#cfcfd2" $ml={15} $ls={-0.05}>Search</T>
          <Pangolin width="70" height="34" viewBox="0 0 70 34">
            <ellipse cx="35" cy="28" rx="33" ry="5.500" fill="#7f9a45" />
            <path d="M2 27c1-6 5-10 10-12C17 6 24 1 32 1c12 0 20 12 34 19-8 1-14 0-20-1l-1 5h-5l-2-4H24l-2 5h-7l-1-5-6 4c-2 2-5 4-6 3z" fill="#a08a70" />
            {scales.map(([x, y], i) => (
              <circle key={i} cx={x} cy={Math.min(y, 20)} r="2" fill={i % 2 ? '#d2bb9c' : '#c0a888'} stroke="#6d5a48" strokeWidth=".7" />
            ))}
            <path d="M4 26l7-7M17 24h8M37 21l2 5h5" stroke="#e0cdb4" strokeWidth="3" fill="none" />
          </Pangolin>
        </SearchPill>
        <AppTile><Taskview /></AppTile>
        <AppTile><Chat /></AppTile>
        <AppTile $active><Firefox /><RunDot $wide /></AppTile>
        <AppTile><Explorer /></AppTile>
        <AppTile><Terminal /></AppTile>
        <AppTile><Chrome /></AppTile>
        <AppTile><PyBox><PyInner>PC<PyDash /></PyInner></PyBox></AppTile>
        <AppTile><FaWhatsapp size={41} color="#25d366" /><Badge $x={28} $y={3} $w={31} $bg="#4cc2ff">29</Badge></AppTile>
        <AppTile><Phone /><Badge $x={28} $y={3} $w={31} $bg="#4cc2ff">59</Badge></AppTile>
        <AppTile><Code /><RunDot /></AppTile>
        <AppTile><Moba /><RunDot /></AppTile>
        <Gap $w={403} />
        <S w={16} h={10} sw={1.9}><path d="M1 9l7-7.500L15 9" /></S>
        <Gap $w={28} />
        <S w={24} h={19} sw={1.9}>
          <path d="M1.500 7.500a15 15 0 0 1 21 0M5 11a10 10 0 0 1 14 0M8.500 14.500a5 5 0 0 1 7 0" />
          <circle cx="12" cy="17" r="1.500" fill="#fff" strokeWidth="1" />
        </S>
        <Gap $w={12} />
        <S w={24} h={20} sw={1.8}>
          <path d="M1 7.500h4l5-5v15l-5-5H1zM13.500 6.500c1.500 2 1.500 5 0 7M17 4c3 3.500 3 8.500 0 12" />
          <path d="M20.500 2c3.500 5 3.500 11 0 16" stroke="#666" />
        </S>
        <Gap $w={12} />
        <S w={24} h={20} sw={1.9}>
          <path d="M7 5H18q2.500 0 2.500 2.500v7Q20.500 17 18 17H4q-2.500 0-2.500-2.500V12" />
          <path d="M8 8h9.500v6.500H5.500z" fill="#fff" strokeWidth="1" />
          <path d="M22.800 9v4M4.500 1L1.500 6.500H5L3 10.500" />
        </S>
        <Clock>
          <T $ui $s={17.5} $lh={24} $c="#fff">4:38 PM</T>
          <T $ui $s={17.5} $lh={24} $c="#fff">2/17/2024</T>
        </Clock>
        <Gap $w={12} />
        <svg width="22" height="24" viewBox="0 0 22 24" fill="#8fe3ff">
          <path d="M11 0c5 0 8 3.500 8 8v6l2.500 5H.5L3 14V8c0-4.500 3-8 8-8zM7 20.500h8a4 3 0 0 1-8 0z" />
        </svg>
      </Taskbar>
    </Page>
  );
}
